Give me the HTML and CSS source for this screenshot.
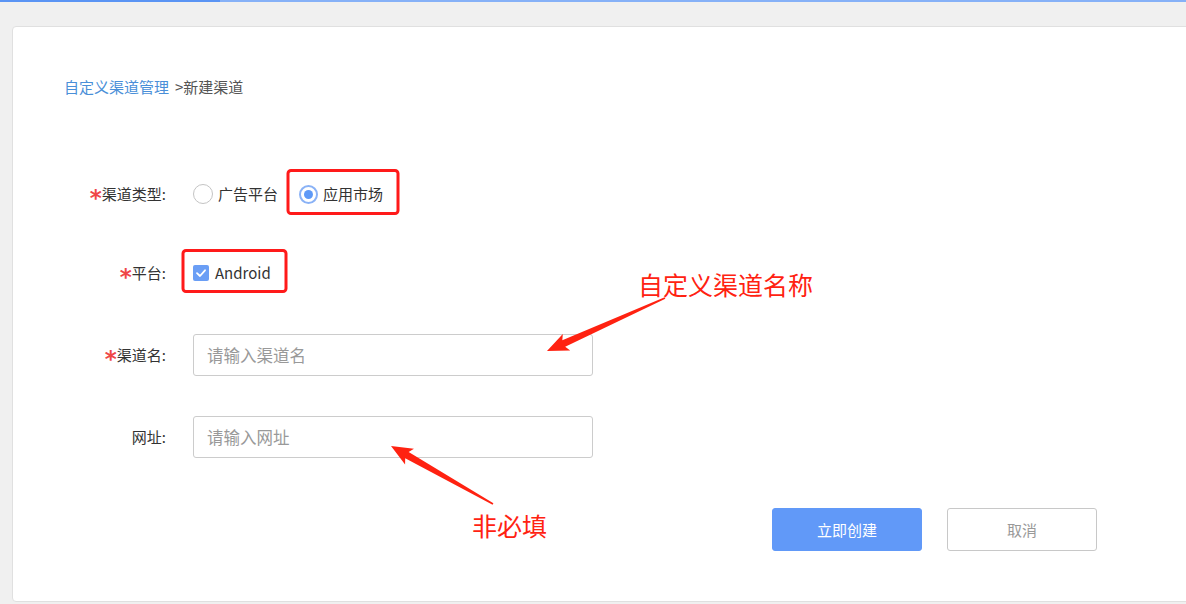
FILE: index.html
```html
<!DOCTYPE html>
<html lang="zh-CN">
<head>
<meta charset="utf-8">
<title>新建渠道</title>
<link rel="stylesheet" href="styles.css">
</head>
<body>
<div class="topbar"><div class="topbar-active"></div></div>
<main class="page">
  <section class="card">
    <nav class="breadcrumb"><a class="crumb-link">自定义渠道管理</a><span class="crumb-current">&gt;新建渠道</span></nav>
    <form class="form">
      <div class="row">
        <label class="label"><span class="req">*</span>渠道类型:</label>
        <div class="control">
          <span class="radio"><span class="radio-circle"></span>广告平台</span>
          <span class="radio radio-checked"><span class="radio-circle"><span class="radio-dot"></span></span>应用市场</span>
        </div>
      </div>
      <div class="row row-platform">
        <label class="label"><span class="req">*</span>平台:</label>
        <div class="control">
          <span class="checkbox"><span class="checkbox-box"><svg viewBox="0 0 16 16" width="16" height="16"><path d="M4 8.2 L7 11 L12 5.3" fill="none" stroke="#fff" stroke-width="1.8" stroke-linecap="round" stroke-linejoin="round"/></svg></span>Android</span>
        </div>
      </div>
      <div class="row row-input">
        <label class="label"><span class="req">*</span>渠道名:</label>
        <div class="control"><input class="input" type="text" placeholder="请输入渠道名"></div>
      </div>
      <div class="row row-input">
        <label class="label">网址:</label>
        <div class="control"><input class="input" type="text" placeholder="请输入网址"></div>
      </div>
      <div class="actions">
        <button type="button" class="btn btn-primary">立即创建</button>
        <button type="button" class="btn btn-default">取消</button>
      </div>
    </form>
  </section>
</main>
<div class="annotations">
  <svg class="marks" width="1186" height="604" viewBox="0 0 1186 604">
    <rect x="288" y="170.5" width="110" height="43" rx="3" fill="none" stroke="#ff1a1a" stroke-width="3"/>
    <rect x="183" y="250.5" width="103" height="41" rx="3" fill="none" stroke="#ff1a1a" stroke-width="3"/>
    <g transform="translate(665,298) rotate(155.8)">
      <polygon points="0,-0.8 111,-3.5 108,-9 129.4,0 108,9 111,3.5 0,0.8" fill="#ff2211"/>
    </g>
    <g transform="translate(493,504) rotate(-150.4)">
      <polygon points="0,-0.8 99,-3.5 96,-9 117.3,0 96,9 99,3.5 0,0.8" fill="#ff2211"/>
    </g>
  </svg>
  <div class="note note-name">自定义渠道名称</div>
  <div class="note note-optional">非必填</div>
</div>
</body>
</html>
```

FILE: styles.css
```css
html, body {
  margin: 0;
  padding: 0;
}
body {
  width: 1186px;
  height: 604px;
  overflow: hidden;
  position: relative;
  background: #f0f0f0;
  font-family: "Noto Sans CJK SC", "Noto Sans", sans-serif;
  color: #333;
}
.topbar {
  height: 2px;
  background: #86b1f7;
}
.topbar-active {
  width: 220px;
  height: 2px;
  background: #5a94f4;
}
.page {
  padding: 24px 0 0 12px;
}
.card {
  box-sizing: border-box;
  width: 1200px;
  height: 576px;
  background: #fff;
  border: 1px solid #e0e0e0;
  border-radius: 4px;
  padding: 50px 0 0 51px;
}
.breadcrumb {
  font-size: 15px;
  line-height: 20px;
  height: 20px;
}
.crumb-link {
  color: #4a8fd8;
  text-decoration: none;
}
.crumb-current {
  color: #555;
  margin-left: 6px;
}
.form {
  margin: 76px 0 0;
  display: flex;
  flex-direction: column;
}
.row {
  display: flex;
  align-items: center;
  height: 42px;
}
.row-platform {
  margin-top: 37px;
}
.row-input {
  margin-top: 40px;
}
.label {
  width: 102px;
  text-align: right;
  font-size: 15px;
  line-height: 20px;
  color: #333;
  white-space: nowrap;
}
.req {
  font-family: "DejaVu Sans", sans-serif;
  font-weight: bold;
  color: #ef4747;
  font-size: 23px;
  line-height: 10px;
  vertical-align: -6px;
}
.control {
  margin-left: 27px;
  display: flex;
  align-items: center;
}
.radio {
  display: inline-flex;
  align-items: center;
  font-size: 15px;
  line-height: 20px;
  color: #333;
}
.radio + .radio {
  margin-left: 21px;
}
.radio-circle {
  box-sizing: border-box;
  width: 20px;
  height: 20px;
  border: 1px solid #c4c4c4;
  border-radius: 50%;
  margin-right: 5px;
  display: flex;
  align-items: center;
  justify-content: center;
}
.radio-checked .radio-circle {
  width: 19px;
  height: 19px;
  border: 2px solid #8ab2f6;
}
.radio-dot {
  width: 9px;
  height: 9px;
  border-radius: 50%;
  background: #5e99f7;
}
.checkbox {
  display: inline-flex;
  align-items: center;
  font-size: 15px;
  line-height: 20px;
  color: #333;
}
.checkbox-box {
  width: 16px;
  height: 16px;
  border-radius: 2px;
  background: #6a9ef5;
  margin-right: 6px;
  display: flex;
}
.input {
  box-sizing: border-box;
  width: 400px;
  height: 42px;
  border: 1px solid #cccccc;
  border-radius: 3px;
  padding: 0 13px;
  font-family: inherit;
  font-size: 16.5px;
  color: #333;
  outline: none;
}
.input::placeholder {
  color: #999;
}
.actions {
  margin-top: 50px;
  padding-left: 708px;
  display: flex;
  gap: 25px;
}
.btn {
  box-sizing: border-box;
  width: 150px;
  height: 43px;
  border-radius: 3px;
  font-family: inherit;
  font-size: 15px;
  cursor: pointer;
}
.btn-primary {
  background: #6199f8;
  border: 1px solid #6199f8;
  color: #fff;
}
.btn-default {
  background: #fff;
  border: 1px solid #c8c8c8;
  color: #999;
}
.annotations {
  position: absolute;
  left: 0;
  top: 0;
  width: 1186px;
  height: 604px;
  pointer-events: none;
}
.marks {
  position: absolute;
  left: 0;
  top: 0;
}
.note {
  position: absolute;
  color: #ff2211;
  font-size: 25px;
  line-height: 32px;
  white-space: nowrap;
}
.note-name {
  left: 638px;
  top: 268px;
}
.note-optional {
  left: 472px;
  top: 509px;
}
```
